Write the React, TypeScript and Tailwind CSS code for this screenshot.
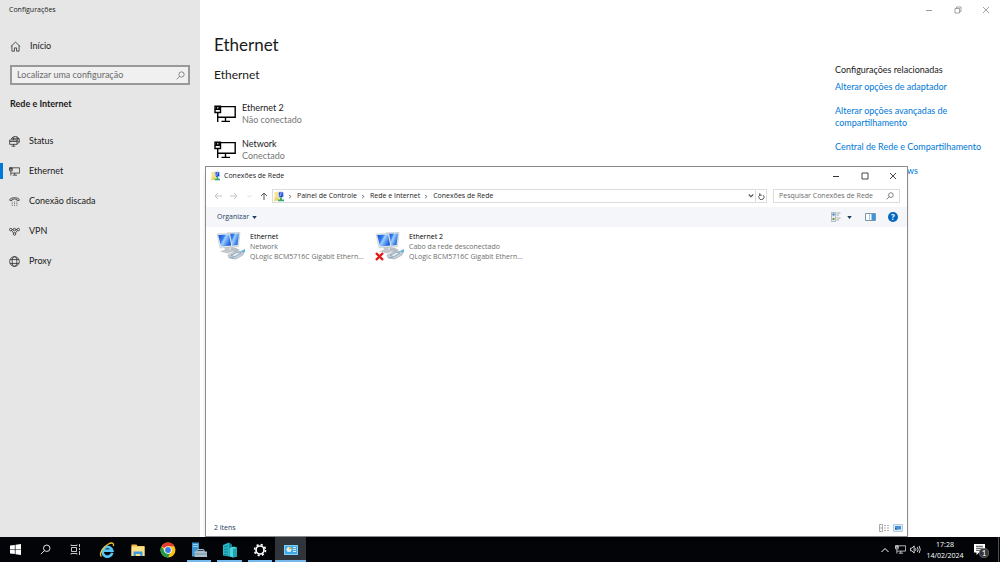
import React from "react";

const sideItems = [
  { label: "Status", icon: "status" },
  { label: "Ethernet", icon: "ethernet", active: true },
  { label: "Conexão discada", icon: "dialup" },
  { label: "VPN", icon: "vpn" },
  { label: "Proxy", icon: "proxy" },
];

const relatedLinks = [
  "Alterar opções de adaptador",
  "Alterar opções avançadas de compartilhamento",
  "Central de Rede e Compartilhamento",
  "Firewall do Windows",
];

const networks = [
  { name: "Ethernet 2", state: "Não conectado" },
  { name: "Network", state: "Conectado" },
];

const adapters = [
  { name: "Ethernet", state: "Network", off: false },
  { name: "Ethernet 2", state: "Cabo da rede desconectado", off: true },
];

const taskApps = [
  { name: "Internet Explorer", icon: "ie", open: false, active: false },
  { name: "Explorador de Arquivos", icon: "folder", open: false, active: false },
  { name: "Chrome", icon: "chrome", open: false, active: false },
  { name: "Gerenciador do Servidor", icon: "server", open: true, active: false },
  { name: "Hyper-V", icon: "cluster", open: true, active: false },
  { name: "Configurações", icon: "gear", open: true, active: false },
  { name: "Conexões de Rede", icon: "panel", open: true, active: true },
];

function SearchIcon({ className = "" }) {
  return (
    <svg viewBox="0 0 16 16" className={className} fill="none" stroke="currentColor" strokeWidth="1.3">
      <circle cx="9.8" cy="6.2" r="4.7" />
      <path d="M6.4 9.6 1.2 14.8" />
    </svg>
  );
}

function EthernetIcon({ className = "" }) {
  return (
    <svg viewBox="0 0 22 18" className={className} fill="none" stroke="currentColor" strokeWidth="1.4">
      <path d="M7 1.6h14.200v10.600H4.200M3.700 8v9M11.500 12.200v4M7.500 16.400h8.500" />
      <path d="M1 1.300h5.500v6.200H1zM1 4.300h5.500M2.600 1.500v2.500M5 1.500v2.500" />
    </svg>
  );
}

function SideIcon({ name }: { name: string }) {
  if (name === "ethernet") return <EthernetIcon className="w-[11px] h-[9px]" />;
  return (
    <svg viewBox="0 0 20 20" className="w-[11px] h-[11px]" fill="none" stroke="currentColor" strokeWidth="1.3">
      {name === "home" && <path d="M1.500 10 10 2l8.500 8M3.500 8.500v10H8v-6h4v6h4.500v-10" />}
      {name === "status" && (
        <>
          <path d="M4 5C6 2 8.500 1 11.500 1c4.500 0 7.500 3.200 7.500 7.300 0 3.200-1.500 5.200-4 6.200" />
          <path d="M4 5h14.500M15.500 10.500h3.500M10 1.500C8.500 3 8 4 7.800 7M13 1.200c2.500 2.200 3.200 5 3 8" />
          <path d="M1.200 7.200h13.300v8H1.200zM1.200 10h13.300M4.500 18.500h7M8 15.200v3.300" />
        </>
      )}
      {name === "dialup" && (
        <>
          <path d="M1.500 8V6C4 2.300 16 2.300 18.500 6v2h-4V6.300c-2-1-7-1-9 0V8z" />
          <path d="M5 11h1.500m3 0H11m2.500 0H15M5 14h1.500m3 0H11m2.500 0H15M5 17h1.500m3 0H11m2.500 0H15" />
        </>
      )}
      {name === "vpn" && (
        <>
          <circle cx="3.200" cy="6.500" r="2.300" />
          <circle cx="10" cy="6.500" r="2.300" />
          <circle cx="16.800" cy="6.500" r="2.300" />
          <circle cx="10" cy="14.500" r="2.300" />
          <path d="m5 8.500 3.300 4.300M15 8.500l-3.300 4.300M5.500 6.500h2M12.500 6.500h2" />
        </>
      )}
      {name === "proxy" && (
        <>
          <circle cx="10" cy="10" r="8.800" />
          <ellipse cx="10" cy="10" rx="4.200" ry="8.800" />
          <path d="M2 6.500h16M2 13.500h16" />
        </>
      )}
    </svg>
  );
}

function CaptionButtons({ className = "", restore = false }) {
  return (
    <div className={`flex ${className}`}>
      <button aria-label="Minimizar" className="w-[28px] h-5 grid place-items-center">
        <svg viewBox="0 0 8 8" className="w-2 h-2" stroke="currentColor"><path d="M1 4.500h6" /></svg>
      </button>
      <button aria-label={restore ? "Restaurar" : "Maximizar"} className="w-[29px] h-5 grid place-items-center">
        <svg viewBox="0 0 8 8" className="w-2 h-2" fill="none" stroke="currentColor" strokeWidth="0.900">
          {restore ? <path d="M1 2.500h4.500V7H1zM2.500 2.500V1H7v4.500H5.500" /> : <path d="M1 1h6v6H1z" />}
        </svg>
      </button>
      <button aria-label="Fechar" className="w-[28px] h-5 grid place-items-center">
        <svg viewBox="0 0 8 8" className="w-2 h-2" stroke="currentColor" strokeWidth="0.900"><path d="m1 1 6 6M7 1 1 7" /></svg>
      </button>
    </div>
  );
}

function NetworkIcon({ className = "" }) {
  return (
    <svg viewBox="0 0 22 22" className={className}>
      <path d="M1 2 11 1v16l-10 3z" fill="#f8e68c" />
      <path d="M1 15l8-3v6l-8 3z" fill="#ecd665" />
      <path d="m8 3 6-2.500 6 2.500v9l-6 2-6-3z" fill="#b9cbe6" />
      <path d="m10 3 7-1 1 9-7 2z" fill="#1d37d2" />
      <path d="m13 3 3-1-2 8-3 1z" fill="#86adff" />
      <path d="M12 13h4v5h-4z" fill="#35b86b" />
      <path d="M8 17h12v3.500H8z" fill="#3aa575" />
    </svg>
  );
}

function AdapterIcon({ off }: { off: boolean }) {
  return (
    <svg viewBox="0 0 30 30" className="w-[30px] h-[30px] shrink-0">
      <defs>
        <linearGradient id="screen" x1="0" y1="0" x2="1" y2="0.5">
          <stop offset="0" stopColor="#1a49d8" />
          <stop offset="0.4" stopColor="#2f7df0" />
          <stop offset="0.55" stopColor="#9dd0ff" />
          <stop offset="1" stopColor="#1e62dd" />
        </linearGradient>
      </defs>
      <path d="m15 15 5 1 4 2-4 2-6-1z" fill="#b9bec4" />
      <path d="m11 .8 13-.3-1.500 14-9.500 1.500z" fill="#e3e7ea" stroke="#b4babf" strokeWidth="0.500" />
      <path d="m13 1.800 10-.3-1.500 11.500-7 1z" fill="url(#screen)" />
      <path d="m8 15 5 0 1 3 4 1-6 2.500-8-2 5-2z" fill="#c3c7cb" />
      <path d="m1 2 13-.5 2.500 13L4 16z" fill="#eceff1" stroke="#b4babf" strokeWidth="0.500" />
      <path d="m2.200 3 11-.5 2 11L5 14.500z" fill="url(#screen)" />
      <path d="m23 20 6-3v3l-4 3z" fill="#5eb5e2" />
      <path d="m12 23 8-4 8 1-1 3-7 4-7-1z" fill="#c2d1dc" stroke="#8fa1ae" strokeWidth="0.500" />
      <path d="m15 23.500 6-3 4 .500-6 3.500zM14 25.500l4 .500" fill="#eef4f8" stroke="#72889a" strokeWidth="0.600" />
      {off && <path d="m1 21 7 7m0-7-7 7" stroke="#fff" strokeWidth="4" />}
      {off && <path d="m1 21 7 7m0-7-7 7" stroke="#e01b1b" strokeWidth="2.400" />}
    </svg>
  );
}

function TaskIcon({ name }: { name: string }) {
  return (
    <svg viewBox="0 0 16 16" className="w-4 h-4">
      {name === "ie" && (
        <>
          <path d="M13.300 10.800A4.900 4.900 0 1 1 13.300 8.700H5" fill="none" stroke="#58c4f5" strokeWidth="2.700" />
          <path d="M2.500 14.500C-.500 12.500 4 5 9 2.300c3.500-2 6.300-1.800 5.300 1.700" fill="none" stroke="#f2c12e" strokeWidth="1.300" />
        </>
      )}
      {name === "folder" && (
        <>
          <path d="M1.500 2.500h5l1 1.500h7V14h-13z" fill="#f0b93c" />
          <path d="M1.500 4.500h13V14h-13z" fill="#fde08a" />
          <path d="M3.500 14V9.500h9V14h-2.300v-2H5.800v2z" fill="#3c9bdc" />
        </>
      )}
      {name === "chrome" && (
        <>
          <circle cx="8" cy="8" r="7.500" fill="#fbc116" />
          <path d="M8 8 1.500 4.250A7.500 7.500 0 0 1 14.500 4.250H8z" fill="#e33b2e" />
          <path d="M8 15.500A7.500 7.500 0 0 1 1.500 4.250L4.800 9.900 8 11.500l2-.3z" fill="#229a4b" />
          <circle cx="8" cy="8" r="3.800" fill="#fff" />
          <circle cx="8" cy="8" r="2.900" fill="#3b7ded" />
        </>
      )}
      {name === "server" && (
        <>
          <path d="M1 .5h7v14H1z" fill="#3c94cf" />
          <path d="M2 2.500h5M2 4.500h5" stroke="#a7dcf8" strokeWidth="0.800" />
          <path d="M6.500 7.500h6l1 2h-8z" fill="#33485a" stroke="#a8bccb" />
          <path d="M3.500 9.500H16V15H3.500z" fill="#a9bfcd" />
          <path d="M3.500 12H16" stroke="#6c8799" strokeWidth="0.800" />
        </>
      )}
      {name === "cluster" && (
        <>
          <path d="m1 3 6-2.500v14L1 13.500z" fill="#26b8c6" />
          <path d="m7 .5 3 2v11l-3 1z" fill="#148594" />
          <path d="m7.500 6 4-1.500 3.500 1v9l-4 1-3.500-1z" fill="#4bd3dd" />
          <path d="M11 7v8.500l4-1V6z" fill="#1da3b1" />
          <path d="m2 5 4-1M2 7.500l4-.500M2 10h4M2 12.500l4 .500" stroke="#0d6975" strokeWidth="0.700" />
        </>
      )}
      {name === "gear" && (
        <>
          <circle cx="8" cy="8" r="4" fill="none" stroke="#fff" strokeWidth="1.700" />
          <circle cx="8" cy="8" r="5.500" fill="none" stroke="#fff" strokeWidth="1.600" strokeDasharray="2.160 2.160" />
        </>
      )}
      {name === "panel" && (
        <>
          <path d="M1 3h14v10H1z" fill="#7fd0f7" />
          <path d="M2 4h12v8H2z" fill="#43a7e3" />
          <circle cx="6" cy="7.500" r="2.500" fill="#dff3fd" />
          <path d="M6 7.500V5a2.500 2.500 0 0 1 2.500 2.500z" fill="#f3b52e" />
          <path d="M10 5.500h3M10 7.500h3M10 9.500h3" stroke="#eaf8ff" strokeWidth="0.900" />
        </>
      )}
    </svg>
  );
}

function Sidebar() {
  return (
    <aside className="w-[200px] shrink-0 bg-[#e6e6e6]">
      <div className="h-5 pl-[9px] text-[7px] leading-5 font-['Open_Sans',sans-serif]">Configurações</div>
      <button className="mt-4 h-5 pl-[10px] flex items-center gap-[9px]">
        <SideIcon name="home" />
        Início
      </button>
      <label className="mt-[9px] mx-[10px] h-5 pl-[5px] pr-[3px] flex items-center border-2 border-[#999] bg-[#f0f0f0] text-[#666]">
        <input
          aria-label="Localizar uma configuração"
          placeholder="Localizar uma configuração"
          className="min-w-0 flex-1 outline-none placeholder:text-[#6b6b6b]"
        />
        <SearchIcon className="w-[9px] h-[9px]" />
      </label>
      <h2 className="mt-[9px] h-5 pl-[10px] leading-5 font-bold">Rede e Internet</h2>
      <nav className="mt-3">
        {sideItems.map((item) => (
          <a key={item.label} href="#" className="h-[30px] flex items-center">
            <span className={item.active ? "w-[3px] h-4 bg-[#0078d7]" : "w-[3px] h-4"} />
            <span className="w-[26px] pl-[6px]">
              <SideIcon name={item.icon} />
            </span>
            {item.label}
          </a>
        ))}
      </nav>
    </aside>
  );
}

function Explorer() {
  return (
    <section className="absolute left-[205px] top-[166px] w-[703px] h-[371px] flex flex-col bg-white border border-[#8b8b8b] text-[7px] font-['Open_Sans',sans-serif] shadow-md">
      <header className="h-[18px] flex items-center justify-between">
        <div className="pl-[5px] flex items-center gap-[3px]">
          <NetworkIcon className="w-[10px] h-[10px]" />
          Conexões de Rede
        </div>
        <CaptionButtons className="text-[#333]" />
      </header>
      <div className="h-[22px] pl-2 pr-[7px] flex items-center">
        <div className="w-[58px] flex items-center justify-between pr-1 text-[#c4c4c4]">
          <button aria-label="Voltar">
            <svg viewBox="0 0 8 8" className="w-2 h-2" fill="none" stroke="currentColor"><path d="M8 4H1m3-3L1 4l3 3" /></svg>
          </button>
          <button aria-label="Avançar">
            <svg viewBox="0 0 8 8" className="w-2 h-2" fill="none" stroke="currentColor"><path d="M0 4h7M4 1l3 3-3 3" /></svg>
          </button>
          <button aria-label="Locais recentes">
            <svg viewBox="0 0 8 8" className="w-[5px] h-[5px]" fill="none" stroke="currentColor"><path d="m1 2 3 3 3-3" /></svg>
          </button>
          <button aria-label="Acima" className="text-[#555]">
            <svg viewBox="0 0 8 8" className="w-2 h-2" fill="none" stroke="currentColor"><path d="M4 8V1M1 4l3-3 3 3" /></svg>
          </button>
        </div>
        <div className="h-[14px] flex-1 flex items-center border border-[#dcdcdc] text-[#222]">
          <NetworkIcon className="w-[11px] h-[11px] ml-px" />
          {["Painel de Controle", "Rede e Internet", "Conexões de Rede"].map((part) => (
            <div key={part} className="flex items-center">
              <svg viewBox="0 0 4 6" className="w-1 h-[5px] ml-[3px] mr-1" fill="none" stroke="#444"><path d="m1 1 2 2-2 2" /></svg>
              <button className="px-px">{part}</button>
            </div>
          ))}
          <button aria-label="Histórico" className="ml-auto px-px">
            <svg viewBox="0 0 8 8" className="w-[6px] h-[6px]" fill="none" stroke="#555" strokeWidth="1.500"><path d="m1 2 3 3 3-3" /></svg>
          </button>
          <button aria-label="Atualizar" className="h-full w-[11px] grid place-items-center border-l border-[#dcdcdc]">
            <svg viewBox="0 0 8 8" className="w-[7px] h-[7px]" fill="none" stroke="#444"><path d="M2.500 2a3 3 0 1 0 3.500.5M2 .2v2.300h2.300" /></svg>
          </button>
        </div>
        <label className="ml-[6px] h-[14px] w-[127px] px-[5px] flex items-center border border-[#dcdcdc]">
          <input
            aria-label="Pesquisar Conexões de Rede"
            placeholder="Pesquisar Conexões de Rede"
            className="min-w-0 flex-1 outline-none placeholder:text-[#6b6b6b]"
          />
          <SearchIcon className="w-2 h-2 text-[#444]" />
        </label>
      </div>
      <div className="h-5 bg-[#f4f6f9] flex items-center pl-[11px] pr-[9px] text-[#24405f]">
        <button className="flex items-center gap-[3px]">
          Organizar
          <svg viewBox="0 0 6 4" className="w-[5px] h-[3px]"><path d="M0 0h6L3 4z" fill="#1e395b" /></svg>
        </button>
        <div className="ml-auto flex items-center">
          <button aria-label="Exibição">
            <svg viewBox="0 0 10 10" className="w-[10px] h-[10px]">
              <path d="M.5.500h4v9h-4z" fill="#e7edf2" stroke="#8b98a3" strokeWidth="0.600" />
              <path d="M1.500 1.500h2v2h-2z" fill="#2f77c2" />
              <path d="M1.500 6h2v2h-2z" fill="#6b9a3b" />
              <path d="M5.500 1h4M5.500 3h2.500M5.500 6h4M5.500 8h2.500" stroke="#8b8b8b" strokeWidth="0.700" />
            </svg>
          </button>
          <button aria-label="Mais opções" className="ml-[6px]">
            <svg viewBox="0 0 6 4" className="w-[5px] h-[3px]"><path d="M0 0h6L3 4z" fill="#1e395b" /></svg>
          </button>
          <button aria-label="Painel de visualização" className="ml-[13px]">
            <svg viewBox="0 0 11 8" className="w-[11px] h-2">
              <path d="M.5.500h10v7H.5z" fill="#fff" stroke="#7d95a8" />
              <path d="M4.500 1v6" stroke="#b8c6d1" />
              <path d="M6.500 1h3.500v6H6.500z" fill="#3597e4" />
            </svg>
          </button>
          <button aria-label="Ajuda" className="ml-[12px] w-[10px] h-[10px] rounded-full bg-[#0066c0] text-white text-[8px] leading-[10px] font-bold">
            ?
          </button>
        </div>
      </div>
      <div className="flex-1 flex pl-[10px] pt-[5px]">
        {adapters.map((adapter) => (
          <button key={adapter.name} className="w-[159px] h-[30px] flex text-left leading-[10px]">
            <AdapterIcon off={adapter.off} />
            <span className="pl-1 text-[#6d6d6d] whitespace-nowrap">
              <span className="block text-black">{adapter.name}</span>
              <span className="block">{adapter.state}</span>
              <span className="block">QLogic BCM5716C Gigabit Ethern...</span>
            </span>
          </button>
        ))}
      </div>
      <footer className="h-4 flex items-center pl-2 pr-1 text-[#24405f]">
        2 itens
        <button aria-label="Detalhes" className="ml-auto">
          <svg viewBox="0 0 10 8" className="w-[10px] h-2" stroke="#8b8b8b" strokeWidth="0.700" fill="none">
            <path d="M.5.500h3v7h-3zM.5 4h3M5 1.500h2M8 1.500h2M5 4h2M8 4h2M5 6.500h2M8 6.500h2" />
          </svg>
        </button>
        <button aria-label="Ícones grandes" className="ml-1">
          <svg viewBox="0 0 10 8" className="w-[10px] h-2">
            <path d="M.5.500h9v7h-9z" fill="#dcecf9" stroke="#9cb9d0" strokeWidth="0.700" />
            <path d="M2 2h6v3.500H2z" fill="#4592d8" />
            <path d="M2 4l3 1.500H2z" fill="#1f4f7c" />
          </svg>
        </button>
      </footer>
    </section>
  );
}

function Taskbar() {
  return (
    <footer className="h-[25px] shrink-0 flex bg-[#020408] text-white">
      <button aria-label="Iniciar" className="w-[30px] grid place-items-center">
        <svg viewBox="0 0 10 10" className="w-[11px] h-[11px]" fill="#fff">
          <path d="m0 1.400 4.400-.6v3.900H0zM5 .7 10 0v4.700H5zM0 5.300h4.400v3.900L0 8.600zM5 5.300h5V10l-5-.7z" />
        </svg>
      </button>
      <button aria-label="Pesquisar" className="w-[30px] grid place-items-center">
        <SearchIcon className="w-[11px] h-[11px]" />
      </button>
      <button aria-label="Visão de tarefas" className="w-[30px] grid place-items-center">
        <svg viewBox="0 0 11 11" className="w-[11px] h-[11px]" fill="none" stroke="#ddd" strokeWidth="0.900">
          <path d="M1.500 3.500h5v4h-5zM1 .5v1h6v-1M1 10.500v-1h6v1M9.500 0v3M9.500 7v4M9.500 4v2" />
        </svg>
      </button>
      <div className="ml-0.5 w-[214px] grid grid-cols-7">
        {taskApps.map((app) => (
          <button
            key={app.name}
            aria-label={app.name}
            className={`relative grid place-items-center ${app.active ? "bg-[#30353b]" : ""}`}
          >
            <TaskIcon name={app.icon} />
            {app.open && (
              <span className={`absolute bottom-0 h-0.5 bg-[#76b9ed] ${app.active ? "inset-x-0" : "inset-x-[3px]"}`} />
            )}
          </button>
        ))}
      </div>
      <div className="ml-auto flex items-center">
        <button aria-label="Mostrar ícones ocultos">
          <svg viewBox="0 0 8 8" className="w-2 h-2" fill="none" stroke="#fff"><path d="m.5 6 3.500-3.500L7.500 6" /></svg>
        </button>
        <button aria-label="Rede" className="ml-[6px]">
          <EthernetIcon className="w-[11px] h-[9px]" />
        </button>
        <button aria-label="Volume" className="ml-1">
          <svg viewBox="0 0 12 10" className="w-[11px] h-[9px]" fill="none" stroke="#fff" strokeWidth="0.900">
            <path d="M.5 3.500H2L4.500 1v8L2 6.500H.5zM6 3.500q1 1.500 0 3M8 2.300q1.800 2.700 0 5.400M10 1q2.600 4 0 8" />
          </svg>
        </button>
        <div className="ml-1 w-10 text-center text-[7px] leading-[11px] font-['Open_Sans',sans-serif]">
          <div>17:28</div>
          <div>14/02/2024</div>
        </div>
        <button aria-label="Notificações" className="ml-2 mr-[9px] relative">
          <svg viewBox="0 0 16 16" className="w-4 h-4">
            <path d="M1 2h11v8.500H6L3.500 13v-2.500H1z" fill="#fff" />
            <path d="M3 4.300h7M3 6.300h7M3 8.300h5" stroke="#1a1d21" strokeWidth="0.800" />
            <circle cx="11" cy="11" r="4.800" fill="#33373c" stroke="#85898d" strokeWidth="0.600" />
          </svg>
          <span className="absolute left-[6px] top-[6px] w-[10px] text-[8px] leading-[10px] text-center">1</span>
        </button>
        <span className="h-[25px] w-0.5 border-l border-[#4a4d51]" />
      </div>
    </footer>
  );
}

export default function App() {
  return (
    <div className="relative h-screen flex flex-col overflow-hidden bg-white text-[#1a1a1a] text-[9px] font-[Lato,'Open_Sans',sans-serif]">
      <div className="flex-1 min-h-0 flex">
        <Sidebar />
        <main className="flex-1 flex flex-col">
          <CaptionButtons restore className="self-end text-[#999]" />
          <div className="flex justify-between pl-[14px] pr-[5px]">
            <div>
              <h1 className="mt-[14px] text-[17px] leading-[22px]">Ethernet</h1>
              <h2 className="mt-[9px] text-[12px] leading-5">Ethernet</h2>
              <ul className="mt-[17px]">
                {networks.map((network) => (
                  <li key={network.name} className="mb-3 flex items-center gap-[6px]">
                    <EthernetIcon className="w-[22px] h-[18px] text-black" />
                    <div className="leading-[12px]">
                      <div>{network.name}</div>
                      <div className="text-[#777]">{network.state}</div>
                    </div>
                  </li>
                ))}
              </ul>
            </div>
            <div className="w-[160px] mt-11 leading-[12px]">
              <h3>Configurações relacionadas</h3>
              <ul className="mt-[5px] text-[#0078d7]">
                {relatedLinks.map((link) => (
                  <li key={link} className="mb-3">
                    <a href="#">{link}</a>
                  </li>
                ))}
              </ul>
            </div>
          </div>
        </main>
      </div>
      <Explorer />
      <Taskbar />
    </div>
  );
}
